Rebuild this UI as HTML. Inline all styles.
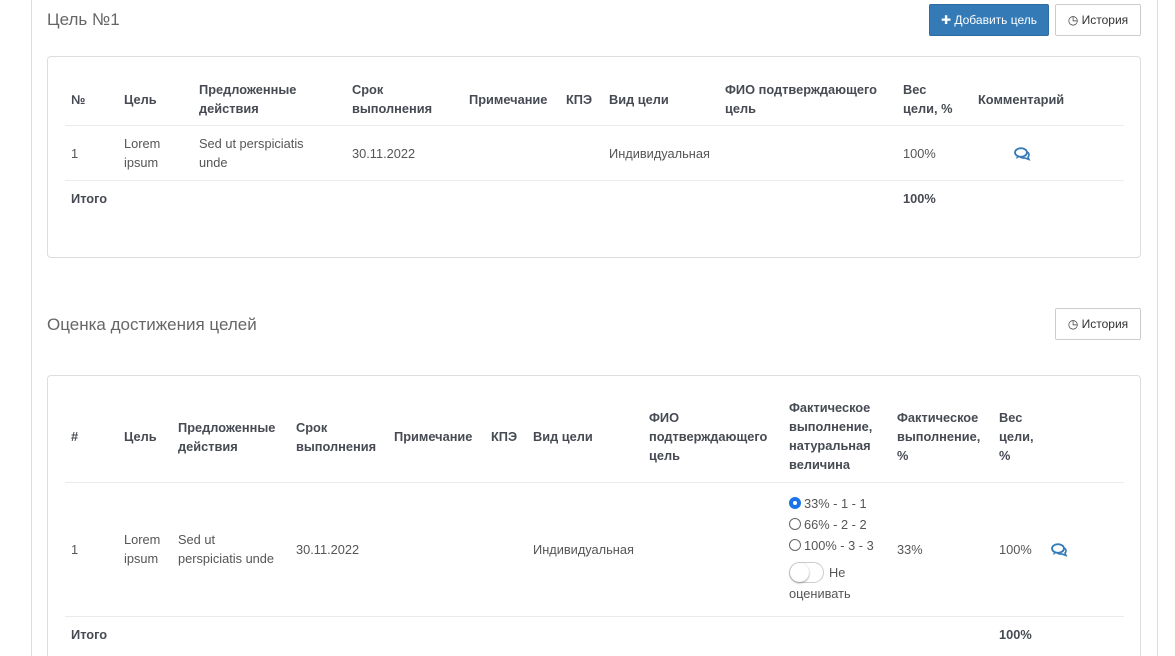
<!DOCTYPE html>
<html style="width:1175px;height:656px;overflow:hidden"><head><meta charset="utf-8"><style>
*{margin:0;padding:0;box-sizing:border-box}
body{width:1175px;height:656px;overflow:hidden;background:#fff;font-family:"Liberation Sans","DejaVu Sans",sans-serif;font-size:12.8px;color:#555;position:relative}
.a{position:absolute;line-height:19px}
.b{font-weight:bold;color:#464a52}
.h{font-size:17px;color:#666;font-weight:300}
.card{position:absolute;left:47px;width:1094px;border:1px solid #ddd;border-radius:4px;background:#fff}
.ln{position:absolute;left:65px;width:1059px;height:1px;background:#e9ecef}
.btn{position:absolute;height:32px;border:1px solid #ccc;background:#fff;color:#333;font-size:12px;display:flex;align-items:center;justify-content:center;border-radius:2px}
.rad{display:inline-block;width:12px;height:12px;border:1px solid #666;border-radius:50%;vertical-align:-1px;margin-right:3px}
</style></head><body>
<div style="position:absolute;left:31px;top:0;width:1px;height:656px;background:#ddd"></div>
<div style="position:absolute;left:1157px;top:0;width:1px;height:656px;background:#ddd"></div>

<div class="a h" style="left:47px;top:10px">Цель №1</div>
<div class="btn" style="left:929px;top:4px;width:120px;background:#337ab7;border-color:#2e6da4;color:#fff">✚&nbsp;Добавить цель</div>
<div class="btn" style="left:1055px;top:4px;width:86px">◷&nbsp;История</div>

<div class="card" style="top:56px;height:202px"></div>
<div class="a b" style="left:71px;top:90px">№</div>
<div class="a b" style="left:124px;top:90px">Цель</div>
<div class="a b" style="left:199px;top:80px">Предложенные<br>действия</div>
<div class="a b" style="left:352px;top:80px">Срок<br>выполнения</div>
<div class="a b" style="left:469px;top:90px">Примечание</div>
<div class="a b" style="left:566px;top:90px">КПЭ</div>
<div class="a b" style="left:609px;top:90px">Вид цели</div>
<div class="a b" style="left:725px;top:80px">ФИО подтверждающего<br>цель</div>
<div class="a b" style="left:903px;top:80px">Вес<br>цели, %</div>
<div class="a b" style="left:978px;top:90px">Комментарий</div>
<div class="ln" style="top:125px"></div>
<div class="a" style="left:71px;top:144px">1</div>
<div class="a" style="left:124px;top:134px">Lorem<br>ipsum</div>
<div class="a" style="left:199px;top:134px">Sed ut perspiciatis<br>unde</div>
<div class="a" style="left:352px;top:144px">30.11.2022</div>
<div class="a" style="left:609px;top:144px">Индивидуальная</div>
<div class="a" style="left:903px;top:144px">100%</div>
<svg style="position:absolute;left:1014px;top:147px" width="17" height="14" viewBox="0 0 17 14"><ellipse cx="7" cy="5.5" rx="6" ry="4.3" fill="none" stroke="#337ab7" stroke-width="1.8"/><path d="M3 9 L2 12 L6 9.6" fill="#337ab7"/><path d="M12 4.5 C15 5.5 16 8 14 10 L15 12.5 L11 11 C9 11.3 7.5 11 6.5 10" fill="none" stroke="#337ab7" stroke-width="1.6"/></svg>
<div class="ln" style="top:180px"></div>
<div class="a b" style="left:71px;top:189px">Итого</div>
<div class="a b" style="left:903px;top:189px">100%</div>

<div class="a h" style="left:47px;top:315px">Оценка достижения целей</div>
<div class="btn" style="left:1055px;top:308px;width:86px">◷&nbsp;История</div>

<div class="card" style="top:375px;height:290px"></div>
<div class="a b" style="left:71px;top:427px">#</div>
<div class="a b" style="left:124px;top:427px">Цель</div>
<div class="a b" style="left:178px;top:418px">Предложенные<br>действия</div>
<div class="a b" style="left:296px;top:418px">Срок<br>выполнения</div>
<div class="a b" style="left:394px;top:427px">Примечание</div>
<div class="a b" style="left:491px;top:427px">КПЭ</div>
<div class="a b" style="left:533px;top:427px">Вид цели</div>
<div class="a b" style="left:649px;top:408px">ФИО<br>подтверждающего<br>цель</div>
<div class="a b" style="left:789px;top:398px">Фактическое<br>выполнение,<br>натуральная<br>величина</div>
<div class="a b" style="left:897px;top:408px">Фактическое<br>выполнение,<br>%</div>
<div class="a b" style="left:999px;top:408px">Вес<br>цели,<br>%</div>
<div class="ln" style="top:482px"></div>
<div class="a" style="left:71px;top:540px">1</div>
<div class="a" style="left:124px;top:530px">Lorem<br>ipsum</div>
<div class="a" style="left:178px;top:530px">Sed ut<br>perspiciatis unde</div>
<div class="a" style="left:296px;top:540px">30.11.2022</div>
<div class="a" style="left:533px;top:540px">Индивидуальная</div>
<div class="a" style="left:789px;top:493px;line-height:21px"><span class="rad" style="border:4px solid #1a73e8"></span>33% - 1 - 1<br><span class="rad"></span>66% - 2 - 2<br><span class="rad"></span>100% - 3 - 3</div>
<div style="position:absolute;left:789px;top:562px;width:35px;height:21px;border:1px solid #ccc;border-radius:11px"><div style="width:19px;height:19px;border-radius:50%;background:#fff;box-shadow:0 1px 2px #999"></div></div>
<div class="a" style="left:829px;top:563px">Не</div>
<div class="a" style="left:789px;top:584px">оценивать</div>
<div class="a" style="left:897px;top:540px">33%</div>
<div class="a" style="left:999px;top:540px">100%</div>
<svg style="position:absolute;left:1051px;top:543px" width="17" height="14" viewBox="0 0 17 14"><ellipse cx="7" cy="5.5" rx="6" ry="4.3" fill="none" stroke="#337ab7" stroke-width="1.8"/><path d="M3 9 L2 12 L6 9.6" fill="#337ab7"/><path d="M12 4.5 C15 5.5 16 8 14 10 L15 12.5 L11 11 C9 11.3 7.5 11 6.5 10" fill="none" stroke="#337ab7" stroke-width="1.6"/></svg>
<div class="ln" style="top:616px"></div>
<div class="a b" style="left:71px;top:625px">Итого</div>
<div class="a b" style="left:999px;top:625px">100%</div>
</body></html>
